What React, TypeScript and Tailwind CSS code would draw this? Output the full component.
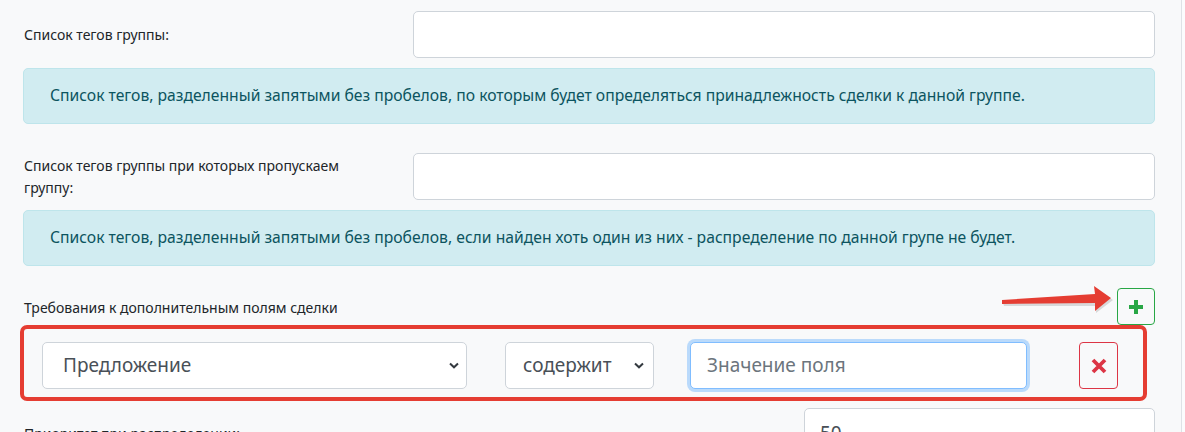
import React from "react";

const font = { fontFamily: '"Noto Sans", "Open Sans", sans-serif' };

const Chevron = () => (
  <svg width="10" height="7" viewBox="0 0 10 7" className="shrink-0">
    <path d="M1 1.5 L5 5.3 L9 1.5" fill="none" stroke="#343a40" strokeWidth="2" />
  </svg>
);

const PlusIcon = () => (
  <svg width="16" height="16" viewBox="0 0 16 16">
    <path d="M8 1 V15 M1 8 H15" stroke="#28a745" strokeWidth="4" />
  </svg>
);

const TimesIcon = () => (
  <svg width="16" height="16" viewBox="0 0 16 16">
    <path d="M2 2 L14 14 M14 2 L2 14" stroke="#dc3545" strokeWidth="3.8" />
  </svg>
);

const Alert = ({ children }: { children: React.ReactNode }) => (
  <div className="mt-[10px] h-[56px] flex items-center rounded-[5px] border border-[#bee5eb] bg-[#d1ecf1] pl-[26px] text-[15.7px] text-[#0c5460]">
    {children}
  </div>
);

const TextInput = ({ value }: { value?: string }) => (
  <div className="flex-1 h-[47px] rounded-[5px] border border-[#ced4da] bg-white flex items-center px-[16px] text-[19px] text-[#495057]">
    {value}
  </div>
);

export default function App() {
  return (
    <div style={font} className="w-[1185px] h-[432px] overflow-hidden bg-[#fbfcfd]">
      <div className="relative w-[1182px] h-full bg-[#f8f9fa] border-r border-[#dee2e6] pl-[23px] pr-[26px] pt-[11px]">
        {/* Теги группы */}
        <div className="flex items-center">
          <div className="w-[390px] pl-[1px] text-[14px] leading-[22px] text-[#212529]">Список тегов группы:</div>
          <TextInput />
        </div>
        <Alert>
          Список тегов, разделенный запятыми без пробелов, по которым будет определяться принадлежность сделки к данной группе.
        </Alert>

        {/* Теги пропуска */}
        <div className="flex items-center mt-[29px]">
          <div className="w-[390px] pl-[1px] pr-[40px] text-[14px] leading-[22px] text-[#212529]">
            Список тегов группы при которых пропускаем группу:
          </div>
          <TextInput />
        </div>
        <Alert>
          Список тегов, разделенный запятыми без пробелов, если найден хоть один из них - распределение по данной групе не будет.
        </Alert>

        {/* Доп. поля */}
        <div className="flex items-center justify-between mt-[22px]">
          <div className="pl-[1px] text-[14px] leading-[22px] text-[#212529] mt-[2px]">Требования к дополнительным полям сделки</div>
          <button className="w-[38px] h-[37px] rounded-[4px] border border-[#28a745] flex items-center justify-center">
            <PlusIcon />
          </button>
        </div>

        <div className="-ml-[3px] w-[1127px] h-[76px] rounded-[7px] border-4 border-[#e53d32] pl-[18px] pt-[13px] flex items-start">
          <div className="w-[425px] h-[47px] rounded-[5px] border border-[#ced4da] bg-white flex items-center justify-between pl-[20px] pr-[7px] text-[19px] text-[#495057]">
            <span>Предложение</span>
            <Chevron />
          </div>
          <div className="ml-[38px] w-[149px] h-[47px] rounded-[5px] border border-[#ced4da] bg-white flex items-center justify-between pl-[17px] pr-[9px] text-[19px] text-[#495057]">
            <span>содержит</span>
            <Chevron />
          </div>
          <div className="ml-[36px] w-[337px] h-[47px] rounded-[5px] border border-[#80bdff] bg-white ring-[3px] ring-[#007bff]/25 flex items-center pl-[16px] text-[19px] text-[#6c757d]">
            Значение поля
          </div>
          <button className="ml-[52px] w-[39px] h-[47px] rounded-[4px] border border-[#dc3545] flex items-center justify-center">
            <TimesIcon />
          </button>
        </div>

        {/* Приоритет */}
        <div className="flex items-start mt-[7px]">
          <div className="w-[781px] pl-[1px] pt-[15px] text-[14px] leading-[22px] text-[#212529]">Приоритет при распределении:</div>
          <div className="flex-1 h-[47px] rounded-[5px] border border-[#ced4da] bg-white pl-[15px] pt-[10px] text-[19px] text-[#495057]">50</div>
        </div>

        {/* Стрелка-аннотация */}
        <svg className="absolute left-0 top-0 pointer-events-none" width="1185" height="432">
          <polygon points="1003,303 1096,296 1096,289 1113,300 1096,313 1096,306 1004,306" fill="#9e9e9e" opacity="0.35" />
          <polygon points="1002,300 1095,294 1094,286 1111,298 1095,311 1095,303 1002,304" fill="#e53d32" />
        </svg>
      </div>
    </div>
  );
}
